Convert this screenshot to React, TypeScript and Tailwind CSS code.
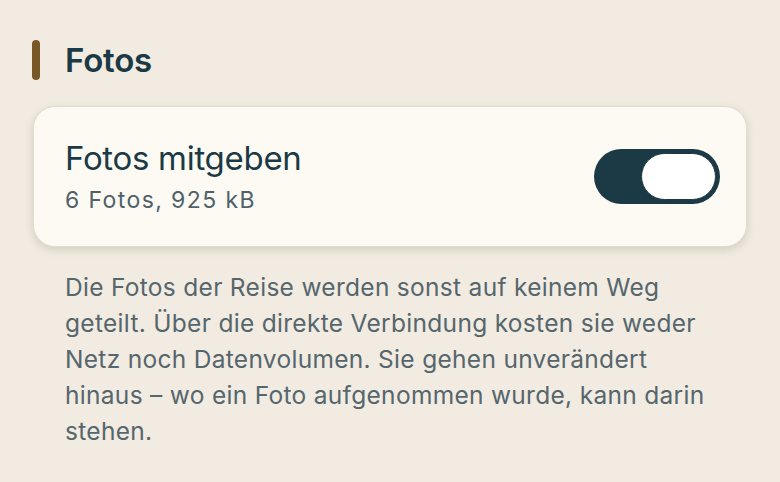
export default function App() {
  return (
    <div className="w-[780px] h-[482px] overflow-hidden bg-[#f1ebe1] font-['Inter','Noto_Sans',sans-serif] antialiased">
      <div className="flex items-center gap-[25px] pl-[32px] pt-[40px]">
        <div className="w-[8px] h-[40px] rounded-full bg-[#7a5726]" />
        <h2 className="text-[33px] font-semibold leading-[40px] text-[#1b3a45] tracking-[-0.2px]">Fotos</h2>
      </div>

      <div className="mx-[33px] mt-[26px] h-[141px] rounded-[22px] bg-[#fdfaf4] border border-[#e2dccf] shadow-[0_3px_8px_rgba(90,75,50,0.18)] flex items-center justify-between pl-[31px] pr-[26px]">
        <div className="flex flex-col">
          <span className="text-[33px] leading-[40px] text-[#1b3a45] tracking-[-0.3px]">Fotos mitgeben</span>
          <span className="text-[23px] leading-[32px] text-[#4f6169] mt-[6px] tracking-[1.4px]">6 Fotos, 925 kB</span>
        </div>
        <button
          type="button"
          className="w-[126px] h-[55px] rounded-full bg-[#1b3a45] p-[4px] flex items-center justify-end"
        >
          <span className="block w-[75px] h-[47px] rounded-full bg-white border border-[#1b3a45]" />
        </button>
      </div>

      <p className="ml-[65px] mt-[22px] w-[660px] text-[24.5px] leading-[36px] text-[#56666d] tracking-[0.3px]">
        Die Fotos der Reise werden sonst auf keinem Weg geteilt. Über die direkte Verbindung kosten sie weder
        Netz noch Datenvolumen. Sie gehen unverändert hinaus – wo ein Foto aufgenommen wurde, kann darin stehen.
      </p>
    </div>
  );
}
